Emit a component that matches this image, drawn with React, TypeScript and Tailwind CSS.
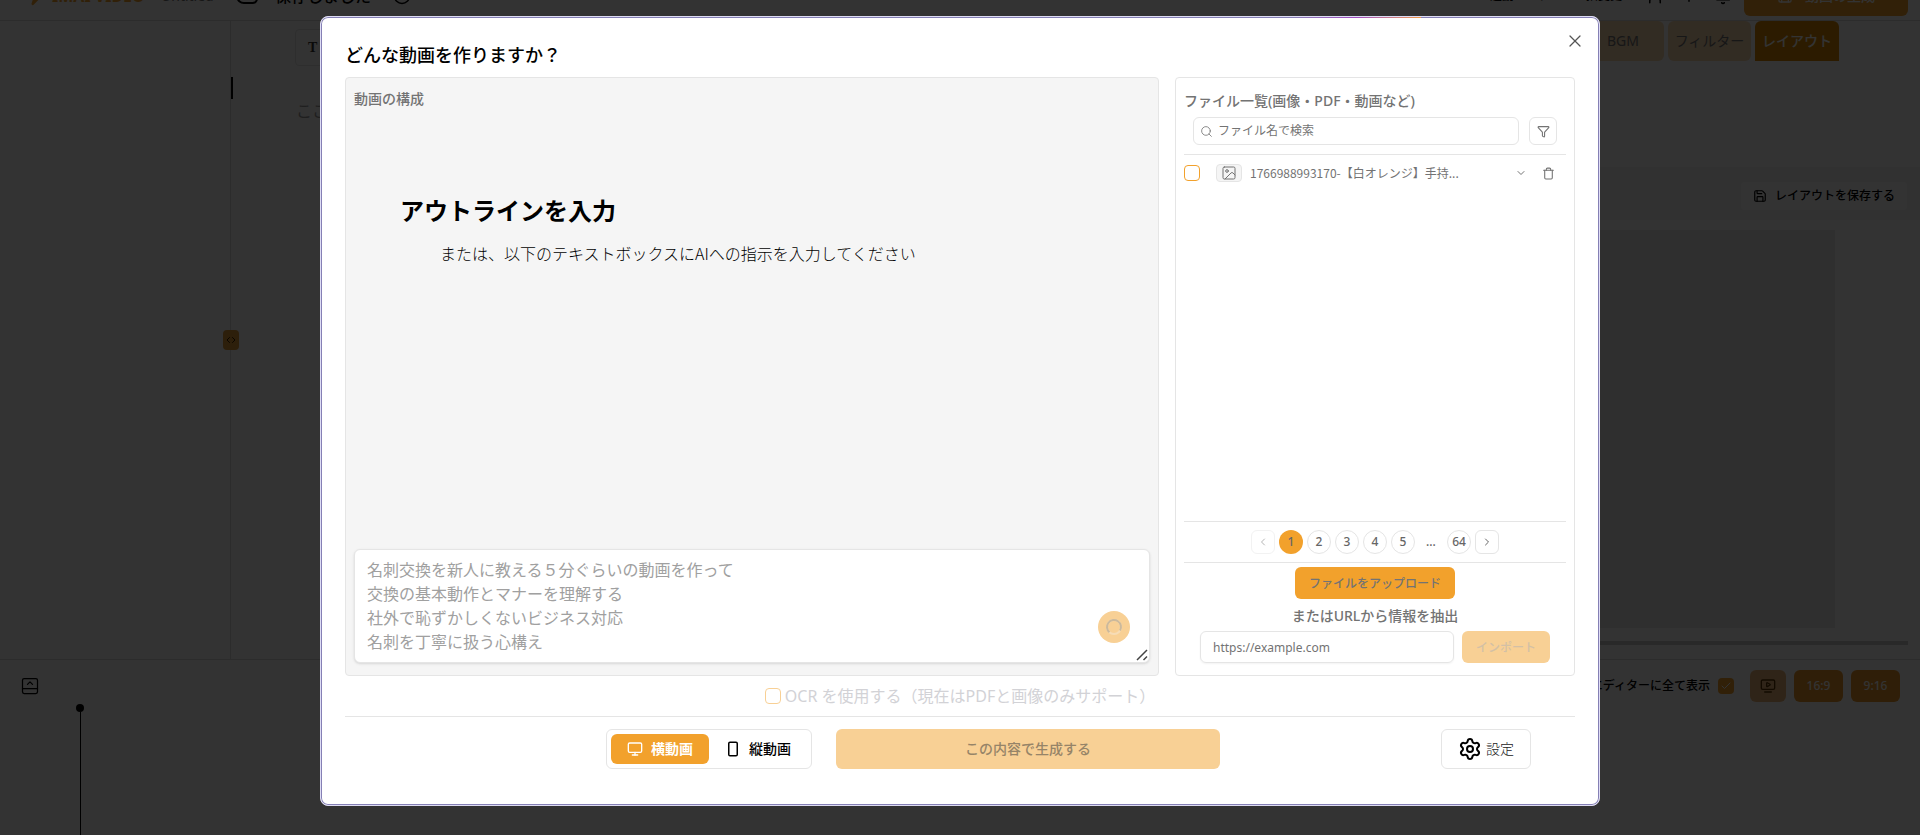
import React, { useState } from 'react';
import {
  Bell, Check, ChevronDown, ChevronLeft, ChevronRight, ChevronsLeftRight, Circle, Cloud, Filter, Image,
  Monitor, PanelBottomOpen, Plus, Save, Search, Settings, Trash, TvMinimalPlay, User, X, Zap
} from 'lucide-react';

const OUTLINE_PLACEHOLDER = [
  '名刺交換を新人に教える５分ぐらいの動画を作って',
  '交換の基本動作とマナーを理解する',
  '社外で恥ずかしくないビジネス対応',
  '名刺を丁寧に扱う心構え',
].join('\n');

const PAGES = ['1', '2', '3', '4', '5', '...', '64'];

const TopBar: React.FC = () => (
  <header className="flex h-[50px] shrink-0 -mt-[29px] items-center border-b border-[#dddddd] pl-6 pr-3">
    <Zap size={20} className="fill-[#f2a12c] text-[#f2a12c]" />
    <span className="ml-2 w-[109px] whitespace-nowrap text-base font-bold text-[#f2a12c]">IMAI VIDEO</span>
    <span className="w-[74px] text-sm text-[#737373]">Untitled</span>
    <Cloud size={24} className="text-black" />
    <span className="ml-4 w-[118px] text-base font-medium">保存しました</span>
    <Circle size={18} />
    <div className="ml-auto flex items-center">
      <span className="mr-6 text-xs font-medium">連動コンテンツ一括変更</span>
      <User size={18} className="mr-4" />
      <Plus size={18} className="mr-4" />
      <Bell size={18} className="mr-3" />
      <button className="flex h-10 w-[164px] items-center justify-center gap-3 rounded-md bg-[#f2a12c] text-sm font-medium text-white">
        <Save size={16} />
        動画の生成
      </button>
    </div>
  </header>
);

const EditorPane: React.FC = () => (
  <section className="relative min-w-0 flex-1">
    <div className="ml-16 mt-2 flex h-[37px] w-[200px] items-center rounded border border-[#e5e5e5] pl-3 font-['Liberation_Serif',serif] text-sm font-bold text-[#333333]">
      T
    </div>
    <div className="mt-[11px] h-[22px] w-[2px] bg-black" />
    <p className="ml-[65px] text-base leading-6 text-[#9a9a9a]">ここ</p>
    <div className="absolute -left-2 top-[309px] flex h-5 w-4 items-center justify-center rounded-sm bg-[#e09a3a] text-[#3a2000]">
      <ChevronsLeftRight size={12} />
    </div>
  </section>
);

const LayoutPane: React.FC = () => (
  <section className="flex w-[360px] shrink-0 flex-col">
    <nav className="ml-[22px] flex h-10 gap-1 text-sm">
      <button className="w-[82px] rounded-md bg-[#f8d9b0] text-[#737373]">BGM</button>
      <button className="w-[83px] whitespace-nowrap rounded-md bg-[#f8d9b0] text-[#737373]">フィルター</button>
      <button className="w-[84px] rounded-t-md bg-[#d98700] font-medium text-white">レイアウト</button>
    </nav>
    <div className="mt-[106px] flex h-[53px] items-center justify-end bg-[#f5f5f5] pr-[13px] pt-1">
      <button className="flex h-7 items-center gap-2 rounded bg-white px-3 text-xs font-medium">
        <Save size={14} />
        レイアウトを保存する
      </button>
    </div>
    <div className="mr-[85px] mt-[10px] flex-1 bg-[#ebebeb]" />
    <div className="mb-[14px] mr-3 mt-[13px] h-1 bg-[#cccccc]" />
  </section>
);

const Timeline: React.FC = () => (
  <footer className="flex h-[176px] shrink-0 items-start justify-between border-t border-[#dddddd] pl-5 pr-5 pt-[10px]">
    <div className="flex h-full items-start">
      <PanelBottomOpen size={20} strokeWidth={1.5} className="mt-[6px]" />
      <div className="ml-9 mt-[34px] flex h-full flex-col items-center">
        <span className="size-2 rounded-full bg-black" />
        <span className="w-px flex-1 bg-black" />
      </div>
    </div>
    <div className="flex items-center gap-2 text-xs font-medium">
      <span>エディターに全て表示</span>
      <span className="mr-2 flex size-4 items-center justify-center rounded-sm bg-[#f2a12c] text-white">
        <Check size={12} />
      </span>
      <button aria-label="プレビュー" className="flex h-8 w-9 items-center justify-center rounded-md bg-[#ecb67a] text-[#5a3500]">
        <TvMinimalPlay size={16} />
      </button>
      <button className="h-8 w-[49px] rounded-md bg-[#e8972a] text-white">16:9</button>
      <button className="h-8 w-[49px] rounded-md bg-[#e8972a] text-white">9:16</button>
    </div>
  </footer>
);

const PhoneIcon: React.FC = () => (
  <svg viewBox="0 0 16 16" className="size-4" fill="none" stroke="currentColor" strokeWidth="1.5">
    <rect x="3.75" y="1.25" width="8.5" height="13.5" rx="1.25" />
  </svg>
);

const OutlinePanel: React.FC = () => (
  <section className="flex min-w-0 flex-1 flex-col rounded border border-[#e5e5e5] bg-[#f5f5f5] px-2 pb-3 pt-[11px]">
    <h3 className="text-sm font-medium leading-5 text-[#737373]">動画の構成</h3>
    <div className="flex-1 pl-[46px] pt-[86px]">
      <p className="text-2xl font-bold leading-8 text-black">アウトラインを入力</p>
      <p className="mt-[14px] pl-10 font-['Noto_Sans_CJK_JP',sans-serif] text-base font-light leading-6 text-black">
        または、以下のテキストボックスにAIへの指示を入力してください
      </p>
    </div>
    <div className="relative flex">
      <textarea
        aria-label="AIへの指示"
        rows={4}
        placeholder={OUTLINE_PLACEHOLDER}
        className="block min-w-0 flex-1 resize-none rounded-md border border-[#e5e5e5] bg-white px-3 py-2 text-base leading-6 shadow-sm outline-none placeholder:text-[#a0a0a0]"
      />
      <button
        aria-label="送信"
        disabled
        className="absolute bottom-5 right-5 flex size-8 items-center justify-center rounded-full bg-[#f8d095]"
      >
        <svg viewBox="0 0 18 18" className="size-[18px]" fill="none" strokeWidth="2">
          <circle cx="9" cy="9" r="7" stroke="#f6dcb6" />
          <path d="M4.4 14.3A7 7 0 1 1 15 12.6" stroke="#ccb99b" />
        </svg>
      </button>
      <svg viewBox="0 0 12 12" className="absolute bottom-[2px] right-[2px] size-3" stroke="#444444" strokeWidth="1.5">
        <path d="M1 11 11 1M7.5 11 11 7.5" />
      </svg>
    </div>
  </section>
);

const Pagination: React.FC = () => (
  <nav className="flex h-[42px] items-center justify-center gap-1 border-y border-[#e5e5e5] text-xs font-medium text-[#666666]">
    <button aria-label="前へ" disabled className="flex size-6 items-center justify-center rounded-md border border-[#f2f2f2] text-[#b5b5b5]">
      <ChevronLeft size={12} />
    </button>
    {PAGES.map(page => {
      if (page === '...') return <span key={page} className="w-6 text-center">...</span>;
      return (
        <button
          key={page}
          className={page === '1'
            ? 'size-6 rounded-full bg-[#f2a12c]'
            : 'size-6 rounded-full border border-[#e5e5e5] bg-white'}
        >
          {page}
        </button>
      );
    })}
    <button aria-label="次へ" className="flex size-6 items-center justify-center rounded-md border border-[#e5e5e5]">
      <ChevronRight size={12} />
    </button>
  </nav>
);

const FilePanel: React.FC = () => (
  <section className="flex w-[400px] shrink-0 flex-col rounded border border-[#e5e5e5] px-2 pb-3 text-[#737373]">
    <h3 className="mt-[13px] text-sm font-medium leading-5">ファイル一覧(画像・PDF・動画など)</h3>
    <div className="mt-[6px] flex gap-[10px] border-b border-[#e5e5e5] px-[9px] pb-[9px]">
      <label className="flex h-7 min-w-0 flex-1 items-center gap-[5px] rounded-md border border-[#e5e5e5] px-[6px]">
        <Search size={13} strokeWidth={1.5} className="shrink-0" />
        <input
          aria-label="ファイル名で検索"
          placeholder="ファイル名で検索"
          className="min-w-0 flex-1 text-xs outline-none placeholder:text-[#737373]"
        />
      </label>
      <button aria-label="フィルター" className="flex size-7 items-center justify-center rounded-md border border-[#e5e5e5]">
        <Filter size={13} />
      </button>
    </div>
    <div className="flex h-9 items-center">
      <input
        type="checkbox"
        aria-label="1766988993170-【白オレンジ】手持..."
        className="size-4 appearance-none rounded-sm border border-[#f2a12c] bg-white"
      />
      <span className="ml-4 flex h-[18px] w-[26px] items-center justify-center rounded-sm border border-[#e5e5e5] bg-[#f5f5f5]">
        <Image size={16} strokeWidth={1.5} />
      </span>
      <span className="ml-2 flex-1 font-['Noto_Sans_CJK_JP',sans-serif] text-xs">1766988993170-【白オレンジ】手持...</span>
      <button aria-label="開く" className="mr-[15px]"><ChevronDown size={12} /></button>
      <button aria-label="削除" className="mr-[11px]"><Trash size={13} strokeWidth={2} /></button>
    </div>
    <div className="flex-1" />
    <Pagination />
    <div className="flex flex-col items-center px-4 pt-1">
      <button className="h-8 w-40 rounded-md bg-[#f2a12c] font-['Noto_Sans_CJK_JP',sans-serif] text-xs font-medium">ファイルをアップロード</button>
      <p className="mt-[7px] text-sm font-medium leading-5">またはURLから情報を抽出</p>
      <div className="mt-[5px] flex w-full gap-2">
        <input
          aria-label="URL"
          placeholder="https://example.com"
          className="h-8 min-w-0 flex-1 rounded-md border border-[#e5e5e5] px-3 text-xs shadow-xs outline-none placeholder:text-[#737373]"
        />
        <button disabled className="h-8 w-[88px] rounded-md bg-[#f8d095] font-['Noto_Sans_CJK_JP',sans-serif] text-xs font-medium text-[#d3c0a6]">インポート</button>
      </div>
    </div>
  </section>
);

const CreateVideoDialog: React.FC = () => {
  const [orientation, setOrientation] = useState<'landscape' | 'portrait'>('landscape');
  const active = 'flex h-[30px] w-[98px] items-center justify-center gap-2 rounded-md bg-[#f2a12c] font-bold text-white';
  const idle = 'flex h-[30px] w-[98px] items-center justify-center gap-2 rounded-md font-medium text-black';

  return (
    <div
      role="dialog"
      aria-label="どんな動画を作りますか？"
      className="fixed inset-x-0 top-4 mx-auto flex h-[calc(100vh-45px)] w-full max-w-7xl flex-col rounded-lg border border-[#dedcf4] bg-white px-6 pb-9 pt-6 shadow-[inset_0_0_0_1px_#8580b5]"
    >
      <div className="absolute right-[178px] top-0 h-px w-[130px] bg-linear-to-r from-[#8580b5] via-[#a04bc0] to-[#f29a3c]" />
      <button aria-label="閉じる" className="absolute right-[14px] top-[14px] text-[#555555]">
        <X size={20} strokeWidth={1.5} />
      </button>
      <h2 className="text-lg font-medium leading-7 text-black">どんな動画を作りますか？</h2>
      <div className="mt-2 flex min-h-0 flex-1 gap-4">
        <OutlinePanel />
        <FilePanel />
      </div>
      <div className="flex h-10 items-center justify-center gap-1 text-base text-[#d2d2d6]">
        <input id="ocr" type="checkbox" disabled className="size-4 appearance-none rounded-sm border border-[#f8d095] bg-white" />
        <label htmlFor="ocr">OCR を使用する（現在はPDFと画像のみサポート）</label>
      </div>
      <div className="flex items-center border-t border-[#e5e5e5] pt-3 text-sm">
        <div className="flex flex-1 justify-center gap-6 pl-10">
          <div className="flex rounded-md border border-[#e5e5e5] p-1">
            <button className={orientation === 'landscape' ? active : idle} onClick={() => setOrientation('landscape')}>
              <Monitor size={16} />
              横動画
            </button>
            <button className={orientation === 'portrait' ? active : idle} onClick={() => setOrientation('portrait')}>
              <PhoneIcon />
              縦動画
            </button>
          </div>
          <button disabled className="h-10 w-96 rounded-md bg-[#f8d095] font-medium text-[#968468]">この内容で生成する</button>
        </div>
        <button className="mr-11 flex h-10 w-[90px] items-center justify-center gap-1 rounded-md border border-[#e5e5e5] font-light text-[#222222]">
          <Settings size={24} className="text-black" />
          設定
        </button>
      </div>
    </div>
  );
};

const App: React.FC = () => (
  <div className="flex h-screen flex-col overflow-hidden bg-white font-['Noto_Sans','Noto_Sans_CJK_JP',sans-serif] text-black">
    <TopBar />
    <main className="flex min-h-0 flex-1">
      <aside className="w-[231px] shrink-0 border-r border-[#dddddd]" />
      <EditorPane />
      <LayoutPane />
    </main>
    <Timeline />
    <div className="fixed inset-0 bg-black/80" />
    <CreateVideoDialog />
  </div>
);

export default App;
